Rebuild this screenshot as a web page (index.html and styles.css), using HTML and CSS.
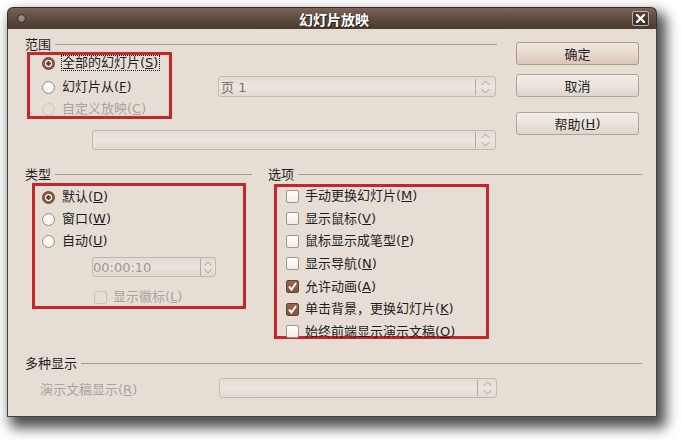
FILE: index.html
```html
<!DOCTYPE html>
<html lang="zh">
<head>
<meta charset="utf-8">
<title>幻灯片放映</title>
<link rel="stylesheet" href="styles.css">
</head>
<body>
<div class="window">
  <div class="titlebar">
    <span class="menu-dot"></span>
    <span class="title">幻灯片放映</span>
    <span class="close"><svg width="9" height="9" viewBox="0 0 9 9"><path d="M1 1 L8 8 M8 1 L1 8" stroke="#fff" stroke-width="2.2" stroke-linecap="square"/></svg></span>
  </div>
  <div class="content">
    <div class="top">
      <div class="main">
        <div class="legend"><span>范围</span><i class="line"></i></div>
        <div class="range-row">
          <div class="mark range-box">
            <div class="row"><span class="radio on"></span><span class="txt focus">全部的幻灯片(<u>S</u>)</span></div>
            <div class="row r2"><span class="radio"></span><span class="txt">幻灯片从(<u>F</u>)</span></div>
            <div class="row r3 disabled"><span class="radio off"></span><span class="txt">自定义放映(<u>C</u>)</span></div>
          </div>
          <div class="field page-spin">
            <span class="field-text">页 1</span>
            <span class="spinner"><svg width="9" height="14" viewBox="0 0 9 14"><path d="M0.5 5 L4.5 1 L8.5 5 M0.5 9 L4.5 13 L8.5 9" fill="none" stroke="#aa9d90" stroke-width="1"/></svg></span>
          </div>
        </div>
        <div class="field custom-combo">
          <span class="field-text"></span>
          <span class="spinner"><svg width="9" height="14" viewBox="0 0 9 14"><path d="M0.5 5 L4.5 1 L8.5 5 M0.5 9 L4.5 13 L8.5 9" fill="none" stroke="#aa9d90" stroke-width="1"/></svg></span>
        </div>
      </div>
      <div class="buttons">
        <div class="btn default">确定</div>
        <div class="btn cancel">取消</div>
        <div class="btn help">帮助(<u>H</u>)</div>
      </div>
    </div>

    <div class="middle">
      <div class="col">
        <div class="legend"><span>类型</span><i class="line"></i></div>
        <div class="mark type-box">
          <div class="row"><span class="radio on"></span><span class="txt">默认(<u>D</u>)</span></div>
          <div class="row gap6"><span class="radio"></span><span class="txt">窗口(<u>W</u>)</span></div>
          <div class="row gap6"><span class="radio"></span><span class="txt">自动(<u>U</u>)</span></div>
          <div class="field time-spin">
            <span class="field-text">00:00:10</span>
            <span class="spinner small"><svg width="8" height="13" viewBox="0 0 8 13"><path d="M0.5 4.5 L4 1 L7.5 4.5 M0.5 8.5 L4 12 L7.5 8.5" fill="none" stroke="#aa9d90" stroke-width="1"/></svg></span>
          </div>
          <div class="row logo-row disabled"><span class="check off"></span><span class="ctxt">显示徽标(<u>L</u>)</span></div>
        </div>
      </div>
      <div class="col">
        <div class="legend"><span>选项</span><i class="line"></i></div>
        <div class="mark opt-box">
          <div class="row"><span class="check"></span><span class="ctxt">手动更换幻灯片(<u>M</u>)</span></div>
          <div class="row"><span class="check"></span><span class="ctxt">显示鼠标(<u>V</u>)</span></div>
          <div class="row"><span class="check"></span><span class="ctxt">鼠标显示成笔型(<u>P</u>)</span></div>
          <div class="row"><span class="check"></span><span class="ctxt">显示导航(<u>N</u>)</span></div>
          <div class="row"><span class="check on"><svg width="11" height="11" viewBox="0 0 11 11"><path d="M2 5.5 L4.5 8.5 L9 2" fill="none" stroke="#fff" stroke-width="2"/></svg></span><span class="ctxt">允许动画(<u>A</u>)</span></div>
          <div class="row"><span class="check on"><svg width="11" height="11" viewBox="0 0 11 11"><path d="M2 5.5 L4.5 8.5 L9 2" fill="none" stroke="#fff" stroke-width="2"/></svg></span><span class="ctxt">单击背景，更换幻灯片(<u>K</u>)</span></div>
          <div class="row"><span class="check"></span><span class="ctxt">始终前端显示演示文稿(<u>O</u>)</span></div>
        </div>
      </div>
    </div>

    <div class="multi">
      <div class="legend"><span>多种显示</span><i class="line"></i></div>
      <div class="multi-row">
        <span class="multi-label">演示文稿显示(<u>R</u>)</span>
        <div class="field multi-combo">
          <span class="field-text"></span>
          <span class="spinner"><svg width="9" height="14" viewBox="0 0 9 14"><path d="M0.5 5 L4.5 1 L8.5 5 M0.5 9 L4.5 13 L8.5 9" fill="none" stroke="#aa9d90" stroke-width="1"/></svg></span>
        </div>
      </div>
    </div>
  </div>
</div>
</body>
</html>
```

FILE: styles.css
```css
* { box-sizing: border-box; }
html, body { margin: 0; padding: 0; background: #ffffff; }
body {
  width: 682px;
  height: 440px;
  overflow: hidden;
  font-family: "DejaVu Sans", "Noto Sans CJK SC", sans-serif;
  font-size: 13px;
  color: #1e1e1e;
}
u { text-decoration: underline; text-underline-offset: 1px; }

.window {
  margin: 7px 0 0 7px;
  width: 650px;
  height: 410px;
  display: flex;
  flex-direction: column;
  border-radius: 6px 6px 2px 2px;
  box-shadow: 6px 8px 13px 3px rgba(0, 0, 0, 0.7);
}

.titlebar {
  height: 22px;
  flex: none;
  display: flex;
  align-items: center;
  padding: 0 7px 0 9px;
  border-radius: 6px 6px 0 0;
  background: linear-gradient(#7b6456, #614d41 45%, #4b3a30);
  border: 1px solid #3a2c24;
  border-bottom: none;
}
.menu-dot {
  width: 9px;
  height: 9px;
  border-radius: 50%;
  border: 1px solid #3d2f27;
  background: radial-gradient(circle at 50% 40%, #a49890, #76675d);
  flex: none;
}
.title {
  flex: 1;
  text-align: center;
  padding-left: 10px;
  color: #ffffff;
  font-family: "Noto Sans CJK SC", sans-serif;
  font-weight: bold;
  font-size: 14px;
  line-height: 16px;
  text-shadow: 1px 1px 0 #2a1e17;
}
.close {
  width: 17px;
  height: 15px;
  flex: none;
  border: 1px solid #b9aca2;
  border-radius: 2px;
  background: linear-gradient(#54433a, #3e3029);
  display: flex;
  align-items: center;
  justify-content: center;
}

.content {
  flex: 1;
  background: #e6ded5;
  border: 1px solid #4e3e35;
  border-top: none;
  padding: 8px 14px 0 17px;
}

.legend {
  display: flex;
  align-items: center;
  height: 15px;
  line-height: 15px;
  white-space: nowrap;
}
.legend .line {
  flex: 1;
  height: 1px;
  background: #a69b90;
  margin-left: 4px;
}

.mark {
  border: 3px solid #c5252b;
  display: flex;
  flex-direction: column;
}

.row {
  height: 16px;
  display: flex;
  align-items: center;
  white-space: nowrap;
  line-height: 16px;
}
.disabled { color: #aaa39b; }

.txt {
  margin-left: 6px;
  border: 1px solid transparent;
  padding: 0 1px 0 0;
  line-height: 14px;
}
.txt.focus { border: 1px dotted #1a1a1a; }
.ctxt { margin-left: 6px; }

.radio {
  width: 13px;
  height: 13px;
  flex: none;
  border-radius: 50%;
  border: 1px solid #9d8c7d;
  background: radial-gradient(circle at 50% 40%, #ffffff, #f0ebe6);
}
.radio.on {
  border-color: #6a412f;
  background: radial-gradient(circle, #6f412c 0 2px, #ffffff 2.5px 3.3px, #8c5b44 3.9px);
}
.radio.off {
  border-color: #d0c6bc;
  background: transparent;
}

.check {
  width: 13px;
  height: 13px;
  flex: none;
  border-radius: 2px;
  border: 1px solid #a39485;
  background: linear-gradient(#ffffff, #f1ece7);
  display: flex;
  align-items: center;
  justify-content: center;
}
.check.on {
  border-color: #6b4231;
  background: linear-gradient(#97644c, #85543e);
}
.check.off {
  border-color: #cdc2b8;
  background: transparent;
}

.field {
  display: flex;
  align-items: center;
  border: 1px solid #c6b8ab;
  border-radius: 3px;
  background: linear-gradient(#e3dbd3, #ece6e0 50%, #e2dad2);
}
.field-text {
  flex: 1;
  padding-left: 2px;
  color: #7b7570;
  white-space: nowrap;
}
.spinner {
  width: 20px;
  height: 16px;
  border-left: 1px solid #b8aa9c;
  display: flex;
  align-items: center;
  justify-content: center;
}
.spinner.small { width: 15px; height: 18px; }

/* top section */
.top {
  display: grid;
  grid-template-columns: 472px 123px;
  column-gap: 19px;
}
.range-row { display: flex; align-items: flex-start; }
.range-box {
  margin-left: 2px;
  width: 145px;
  height: 67px;
  padding-left: 12px;
}
.row.r2 { margin-top: 8px; }
.row.r3 { margin-top: 6px; }
.page-spin {
  margin: 24px 0 0 46px;
  width: 278px;
  height: 21px;
}
.custom-combo {
  margin: 11px 0 0 67px;
  width: 404px;
  height: 20px;
}

.buttons {
  display: flex;
  flex-direction: column;
  padding-top: 5px;
}
.btn {
  height: 23px;
  border: 1px solid #b4a497;
  border-radius: 3px;
  background: linear-gradient(#f2ede8, #ebe4dd 50%, #ded4cb);
  display: flex;
  align-items: center;
  justify-content: center;
}
.btn.default {
  border-color: #ae9a8b;
  background: linear-gradient(#f0e7e0, #e8d9cf 50%, #dac6b9);
}
.btn.cancel { margin-top: 9px; }
.btn.help { margin-top: 15px; }

/* middle section */
.middle {
  display: grid;
  grid-template-columns: 227px 374px;
  column-gap: 16px;
  margin-top: 17px;
  align-items: start;
}
.type-box {
  margin: 1px 0 0 7px;
  width: 214px;
  height: 126px;
  padding: 3px 0 0 7px;
}
.row.gap6 { margin-top: 6px; }
.time-spin {
  margin: 8px 0 0 50px;
  width: 124px;
  height: 20px;
  background: linear-gradient(#e2dad2, #e9e3dc 50%, #e1d9d1);
}
.time-spin .field-text { color: #9d9791; padding-left: 0; }
.logo-row { margin: 12px 0 0 52px; }

.opt-box {
  margin: 2px 0 0 6px;
  width: 215px;
  height: 155px;
  padding: 1px 0 0 9px;
  gap: 6.67px;
}

/* bottom section */
.multi { margin-top: 17px; }
.multi-row {
  display: flex;
  align-items: center;
  margin-top: 7px;
}
.multi-label {
  width: 194px;
  padding-left: 15px;
  color: #aaa39b;
  white-space: nowrap;
}
.multi-combo {
  width: 278px;
  height: 20px;
}
.multi-combo .spinner { width: 19px; }
```
